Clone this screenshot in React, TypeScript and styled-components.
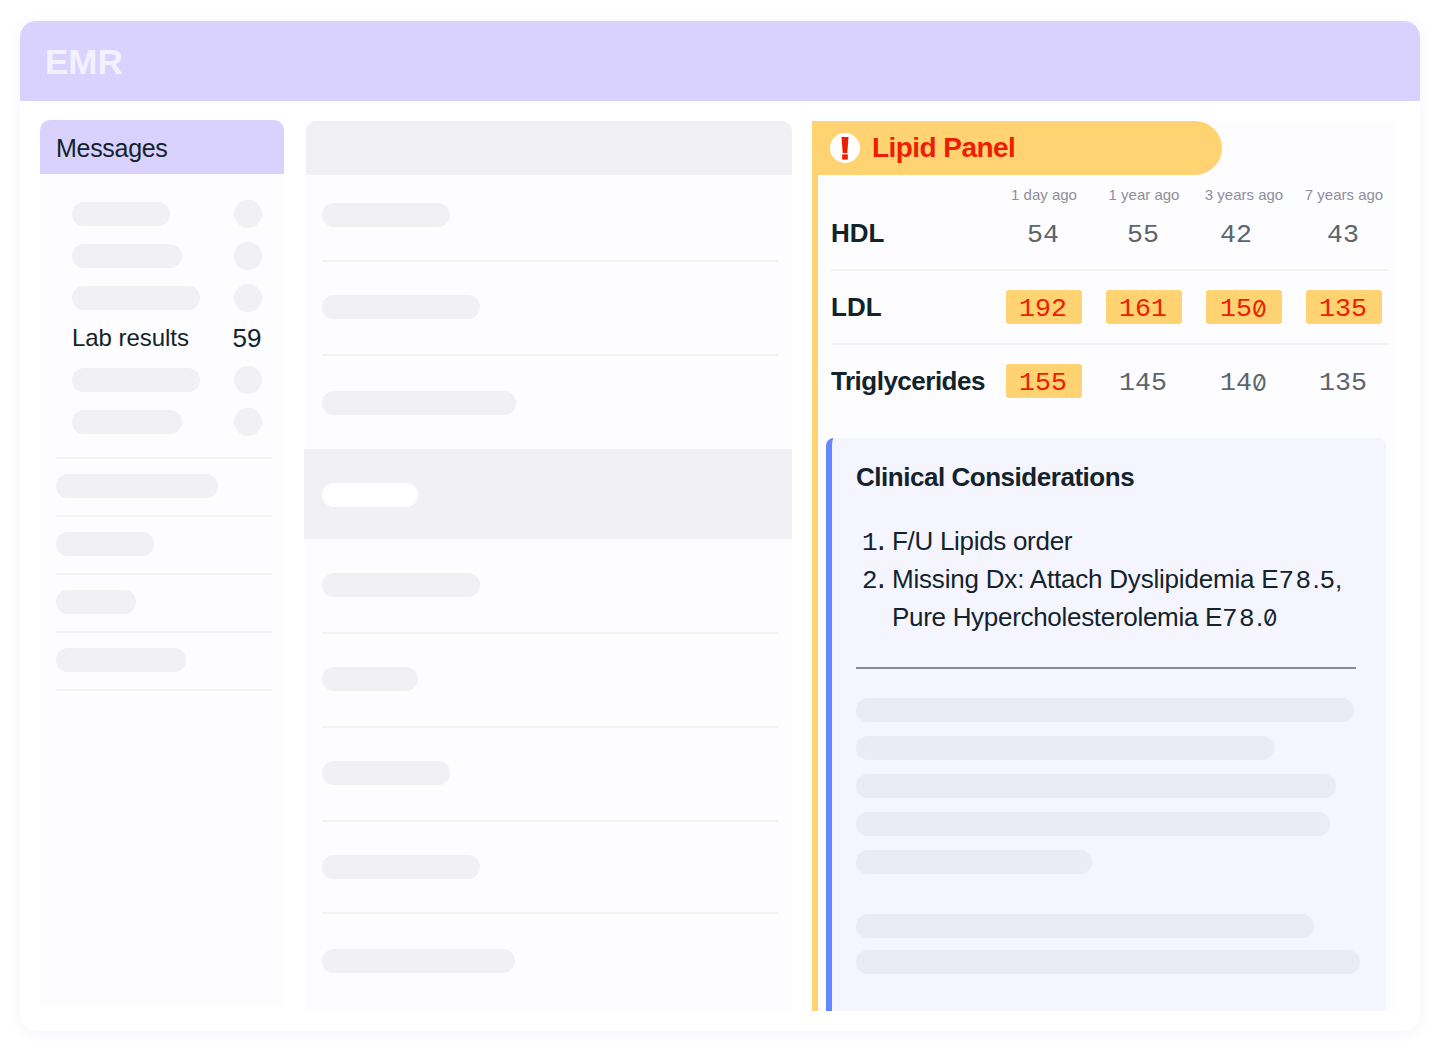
import React from 'react';
import { createGlobalStyle, styled } from 'styled-components';

const GlobalStyle = createGlobalStyle`
  html, body {
    margin: 0;
    padding: 0;
    background: #fff;
    font-family: 'Liberation Sans', Arial, sans-serif;
    color: #12232b;
  }
`;

const sidebarTop = [98, 110, 128];
const sidebarBottom = [128, 110];
const sidebarLinks = [162, 98, 80, 130];

const listRows = [
  { width: 128, top: 28, bottom: 33 },
  { width: 158, top: 33, bottom: 35 },
  { width: 194, top: 35, bottom: 34, plain: true },
  { width: 96, top: 34, bottom: 32, selected: true },
  { width: 158, top: 34, bottom: 35 },
  { width: 96, top: 33, bottom: 35 },
  { width: 128, top: 33, bottom: 35 },
  { width: 158, top: 33, bottom: 33 },
  { width: 193, top: 35, bottom: 0, plain: true },
];

const labRows = [
  {
    name: 'HDL',
    values: [
      { text: '54' },
      { text: '55' },
      { text: '42', shift: 16 },
      { text: '43' },
    ],
  },
  {
    name: 'LDL',
    values: [
      { text: '192', high: true },
      { text: '161', high: true },
      { text: '150', high: true },
      { text: '135', high: true },
    ],
  },
  {
    name: 'Triglycerides',
    tight: true,
    values: [{ text: '155', high: true }, { text: '145' }, { text: '140' }, { text: '135' }],
  },
];

const notes = [
  [498, 418, 480, 474, 236],
  [458, 504],
];

// the mono font has a dotted zero, the reference a slashed one
const withSlashedZero = (text: string) =>
  text.split('').map((char, i) => (char === '0' ? <Zero key={i}>0</Zero> : char));

export default function App() {
  return (
    <Page>
      <GlobalStyle />
      <Window>
        <Topbar>EMR</Topbar>
        <Body>
          <Sidebar>
            <SidebarHeader>Messages</SidebarHeader>
            <Inbox>
              {sidebarTop.map(width => (
                <InboxRow key={width}>
                  <Pill $width={width} />
                  <Dot />
                </InboxRow>
              ))}
              <InboxRow $short>
                <InboxLabel>Lab results</InboxLabel>
                <InboxCount>59</InboxCount>
              </InboxRow>
              {sidebarBottom.map(width => (
                <InboxRow key={width}>
                  <Pill $width={width} />
                  <Dot />
                </InboxRow>
              ))}
            </Inbox>
            {sidebarLinks.map(width => (
              <SidebarLink key={width}>
                <Pill $width={width} />
              </SidebarLink>
            ))}
          </Sidebar>

          <Middle>
            <MiddleHeader />
            <MiddleList>
              {listRows.map((row, i) => (
                <ListRow
                  key={i}
                  $top={row.top}
                  $bottom={row.bottom}
                  $selected={row.selected}
                  $plain={row.plain || row.selected}
                >
                  <Pill $width={row.width} $white={row.selected} />
                </ListRow>
              ))}
            </MiddleList>
          </Middle>

          <Detail>
            <Banner>
              <AlertIcon viewBox="0 0 30 30" aria-hidden="true">
                <circle cx="15" cy="15" r="15" fill="#fff" />
                <path d="M11.5 4h7l-1.2 16h-4.6z" fill="#ee1c00" />
                <rect x="12.2" y="21.4" width="5.6" height="5.2" fill="#ee1c00" />
              </AlertIcon>
              <BannerTitle>Lipid Panel</BannerTitle>
            </Banner>
            <DetailBody>
              <AgeRow>
                <Age>1 day ago</Age>
                <Age>1 year ago</Age>
                <Age>3 years ago</Age>
                <Age>7 years ago</Age>
              </AgeRow>
              {labRows.map((row, i) => (
                <LabRow key={row.name} $first={i === 0} $last={i === labRows.length - 1}>
                  <LabName $tight={row.tight}>{row.name}</LabName>
                  {row.values.map((value, j) => (
                    <LabCell key={j}>
                      <LabValue $high={value.high} $shift={value.shift}>
                        {withSlashedZero(value.text)}
                      </LabValue>
                    </LabCell>
                  ))}
                </LabRow>
              ))}
              <Considerations>
                <ConsiderationsTitle>Clinical Considerations</ConsiderationsTitle>
                <Orders>
                  <Order>
                    <OrderNumber>1.</OrderNumber>
                    <span>F/U Lipids order</span>
                  </Order>
                  <Order>
                    <OrderNumber>2.</OrderNumber>
                    <span>
                      <Loose>Missing Dx: Attach Dyslipidemia E</Loose>
                      <Code $spaced>78</Code>.<Code>5</Code>,
                      <br />
                      Pure Hypercholesterolemia E<Code $spaced>78</Code>.<Code>{withSlashedZero('0')}</Code>
                    </span>
                  </Order>
                </Orders>
                <Rule />
                {notes.map((group, i) => (
                  <NoteGroup key={i}>
                    {group.map(width => (
                      <NotePill key={width} $width={width} />
                    ))}
                  </NoteGroup>
                ))}
              </Considerations>
            </DetailBody>
          </Detail>
        </Body>
      </Window>
    </Page>
  );
}

const Page = styled.div`
  width: 1440px;
  height: 1051px;
  padding: 21px 20px 20px;
  box-sizing: border-box;
  overflow: hidden;
  background: #fff;
`;

const Window = styled.div`
  height: 1010px;
  display: flex;
  flex-direction: column;
  border-radius: 16px;
  background: #fff;
  box-shadow: 0 2px 14px rgba(120, 110, 230, 0.07);
  overflow: hidden;
`;

const Topbar = styled.div`
  height: 80px;
  flex-shrink: 0;
  padding: 2px 0 0 25px;
  box-sizing: border-box;
  display: flex;
  align-items: center;
  background: #d9d2ff;
  color: #f3f1ff;
  font-size: 35px;
  font-weight: 700;
`;

const Body = styled.div`
  flex: 1;
  min-height: 0;
  display: flex;
  gap: 20px;
  padding: 19px 24px 20px 20px;
`;

const Sidebar = styled.div`
  width: 244px;
  flex-shrink: 0;
  margin-bottom: 4px;
  padding: 0 12px 0 16px;
  box-sizing: border-box;
  background: #fdfcff;
  border-radius: 10px 10px 0 0;
`;

const SidebarHeader = styled.div`
  height: 54px;
  margin: 0 -12px 0 -16px;
  padding: 2px 0 0 16px;
  box-sizing: border-box;
  display: flex;
  align-items: center;
  background: #d9d2ff;
  border-radius: 10px 10px 0 0;
  font-size: 25px;
  letter-spacing: -0.3px;
`;

const Inbox = styled.div`
  display: flex;
  flex-direction: column;
  padding: 19px 10px 14px 16px;
  border-bottom: 2px solid #f3f2f8;
`;

const InboxRow = styled.div<{ $short?: boolean }>`
  height: ${p => (p.$short ? 38 : 42)}px;
  padding-bottom: ${p => (p.$short ? 2 : 0)}px;
  display: flex;
  align-items: center;
  justify-content: space-between;
`;

const InboxLabel = styled.span`
  font-size: 24px;
  letter-spacing: -0.05px;
`;

const InboxCount = styled.span`
  width: 30px;
  font-size: 26px;
  text-align: center;
`;

const Pill = styled.div<{ $width: number; $white?: boolean }>`
  width: ${p => p.$width}px;
  height: 24px;
  border-radius: 12px;
  background: ${p => (p.$white ? '#fff' : '#f0f0f5')};
`;

const Dot = styled.div`
  width: 28px;
  height: 28px;
  border-radius: 50%;
  background: #f0f0f5;
`;

const SidebarLink = styled.div`
  height: 54px;
  padding-bottom: 2px;
  display: flex;
  align-items: center;
  border-bottom: 2px solid #f3f2f8;
`;

const Middle = styled.div`
  width: 488px;
  flex-shrink: 0;
  display: flex;
  flex-direction: column;
  margin-top: 1px;
`;

const MiddleHeader = styled.div`
  height: 54px;
  margin-left: 2px;
  flex-shrink: 0;
  background: #f0f0f5;
  border-radius: 10px 10px 0 0;
`;

const MiddleList = styled.div`
  flex: 1;
  margin-left: 2px;
  padding: 0 14px 0 16px;
  background: #fdfcff;
`;

const ListRow = styled.div<{ $top: number; $bottom: number; $selected?: boolean; $plain?: boolean }>`
  padding-top: ${p => p.$top}px;
  padding-bottom: ${p => p.$bottom}px;
  border-bottom: ${p => (p.$plain ? 'none' : '2px solid #f3f2f8')};
  ${p =>
    p.$selected &&
    `
    margin: 0 -14px 0 -18px;
    padding-left: 18px;
    background: #f0f0f5;
  `}
`;

const Detail = styled.div`
  width: 584px;
  flex-shrink: 0;
  display: flex;
  flex-direction: column;
  margin-top: 1px;
  background: #fdfcff;
`;

const Banner = styled.div`
  width: 410px;
  height: 54px;
  flex-shrink: 0;
  padding-left: 18px;
  box-sizing: border-box;
  display: flex;
  align-items: center;
  gap: 12px;
  background: #ffd272;
  border-radius: 0 27px 27px 0;
`;

const AlertIcon = styled.svg`
  width: 30px;
  height: 30px;
  flex-shrink: 0;
`;

const BannerTitle = styled.span`
  color: #ee1c00;
  font-size: 28px;
  font-weight: 700;
  letter-spacing: -0.55px;
`;

const DetailBody = styled.div`
  flex: 1;
  min-height: 0;
  display: flex;
  flex-direction: column;
  padding: 0 8px;
  border-left: 6px solid #ffd272;
`;

const AgeRow = styled.div`
  display: grid;
  grid-template-columns: repeat(4, 100px);
  margin-left: 5px;
  padding: 10px 0 0 163px;
  height: 24px;
  box-sizing: border-box;
`;

const Age = styled.span`
  color: #8d8f99;
  font-size: 15px;
  line-height: 20px;
  text-align: center;
  white-space: nowrap;
`;

const LabRow = styled.div<{ $first?: boolean; $last?: boolean }>`
  height: ${p => (p.$first ? 68 : 72)}px;
  padding-bottom: ${p => (p.$first ? 2 : 0)}px;
  margin-left: 5px;
  display: grid;
  grid-template-columns: 163px repeat(4, 100px);
  align-items: center;
  border-bottom: ${p => (p.$last ? 'none' : '2px solid #f3f2f8')};
`;

const LabName = styled.span<{ $tight?: boolean }>`
  font-size: 26px;
  font-weight: 700;
  letter-spacing: ${p => (p.$tight ? -0.5 : 0)}px;
  white-space: nowrap;
`;

const LabCell = styled.div`
  display: flex;
  justify-content: center;
`;

const LabValue = styled.span<{ $high?: boolean; $shift?: number }>`
  width: 76px;
  height: 34px;
  padding: 4px ${p => p.$shift ?? 2}px 0 0;
  box-sizing: border-box;
  display: flex;
  align-items: center;
  justify-content: center;
  border-radius: 3px;
  background: ${p => (p.$high ? '#ffd272' : 'transparent')};
  color: ${p => (p.$high ? '#ee1c00' : '#5c656c')};
  font-family: 'Liberation Mono', 'DejaVu Sans Mono', monospace;
  font-size: 26.6px;
`;

const Zero = styled.span`
  display: inline-block;
  width: 0.6em;
  font-family: 'Inter', sans-serif;
  font-feature-settings: 'zero' 1;
  font-size: 0.88em;
  line-height: 1;
  text-align: center;
`;

const Considerations = styled.div`
  flex: 1;
  min-height: 0;
  margin-top: 21px;
  width: 560px;
  padding: 24px 26px 0 24px;
  box-sizing: border-box;
  background: #f4f5ff;
  border-left: 6px solid #6488ff;
  border-radius: 8px 8px 0 0;
`;

const ConsiderationsTitle = styled.div`
  font-size: 26px;
  font-weight: 700;
  line-height: 30px;
  letter-spacing: -0.47px;
`;

const Orders = styled.div`
  margin-top: 30px;
  display: flex;
  flex-direction: column;
`;

const Order = styled.div`
  display: flex;
  align-items: baseline;
  font-size: 26px;
  line-height: 38px;
  letter-spacing: -0.3px;
`;

const OrderNumber = styled.span`
  width: 36px;
  padding-left: 6px;
  box-sizing: border-box;
  flex-shrink: 0;
  font-family: 'Liberation Mono', 'DejaVu Sans Mono', monospace;
  letter-spacing: -4px;
  line-height: 1;
`;

const Loose = styled.span`
  letter-spacing: -0.2px;
`;

const Code = styled.span<{ $spaced?: boolean }>`
  font-family: 'Liberation Mono', 'DejaVu Sans Mono', monospace;
  letter-spacing: ${p => (p.$spaced ? 1.4 : 0)}px;
  line-height: 0;
`;

const Rule = styled.div`
  width: 500px;
  height: 2px;
  margin-top: 31px;
  background: #868a99;
`;

const NoteGroup = styled.div`
  margin-top: 29px;
  display: flex;
  flex-direction: column;
  gap: 14px;
  & + & {
    margin-top: 40px;
    gap: 12px;
  }
`;

const NotePill = styled.div<{ $width: number }>`
  width: ${p => p.$width}px;
  height: 24px;
  border-radius: 12px;
  background: #ebebf6;
`;
